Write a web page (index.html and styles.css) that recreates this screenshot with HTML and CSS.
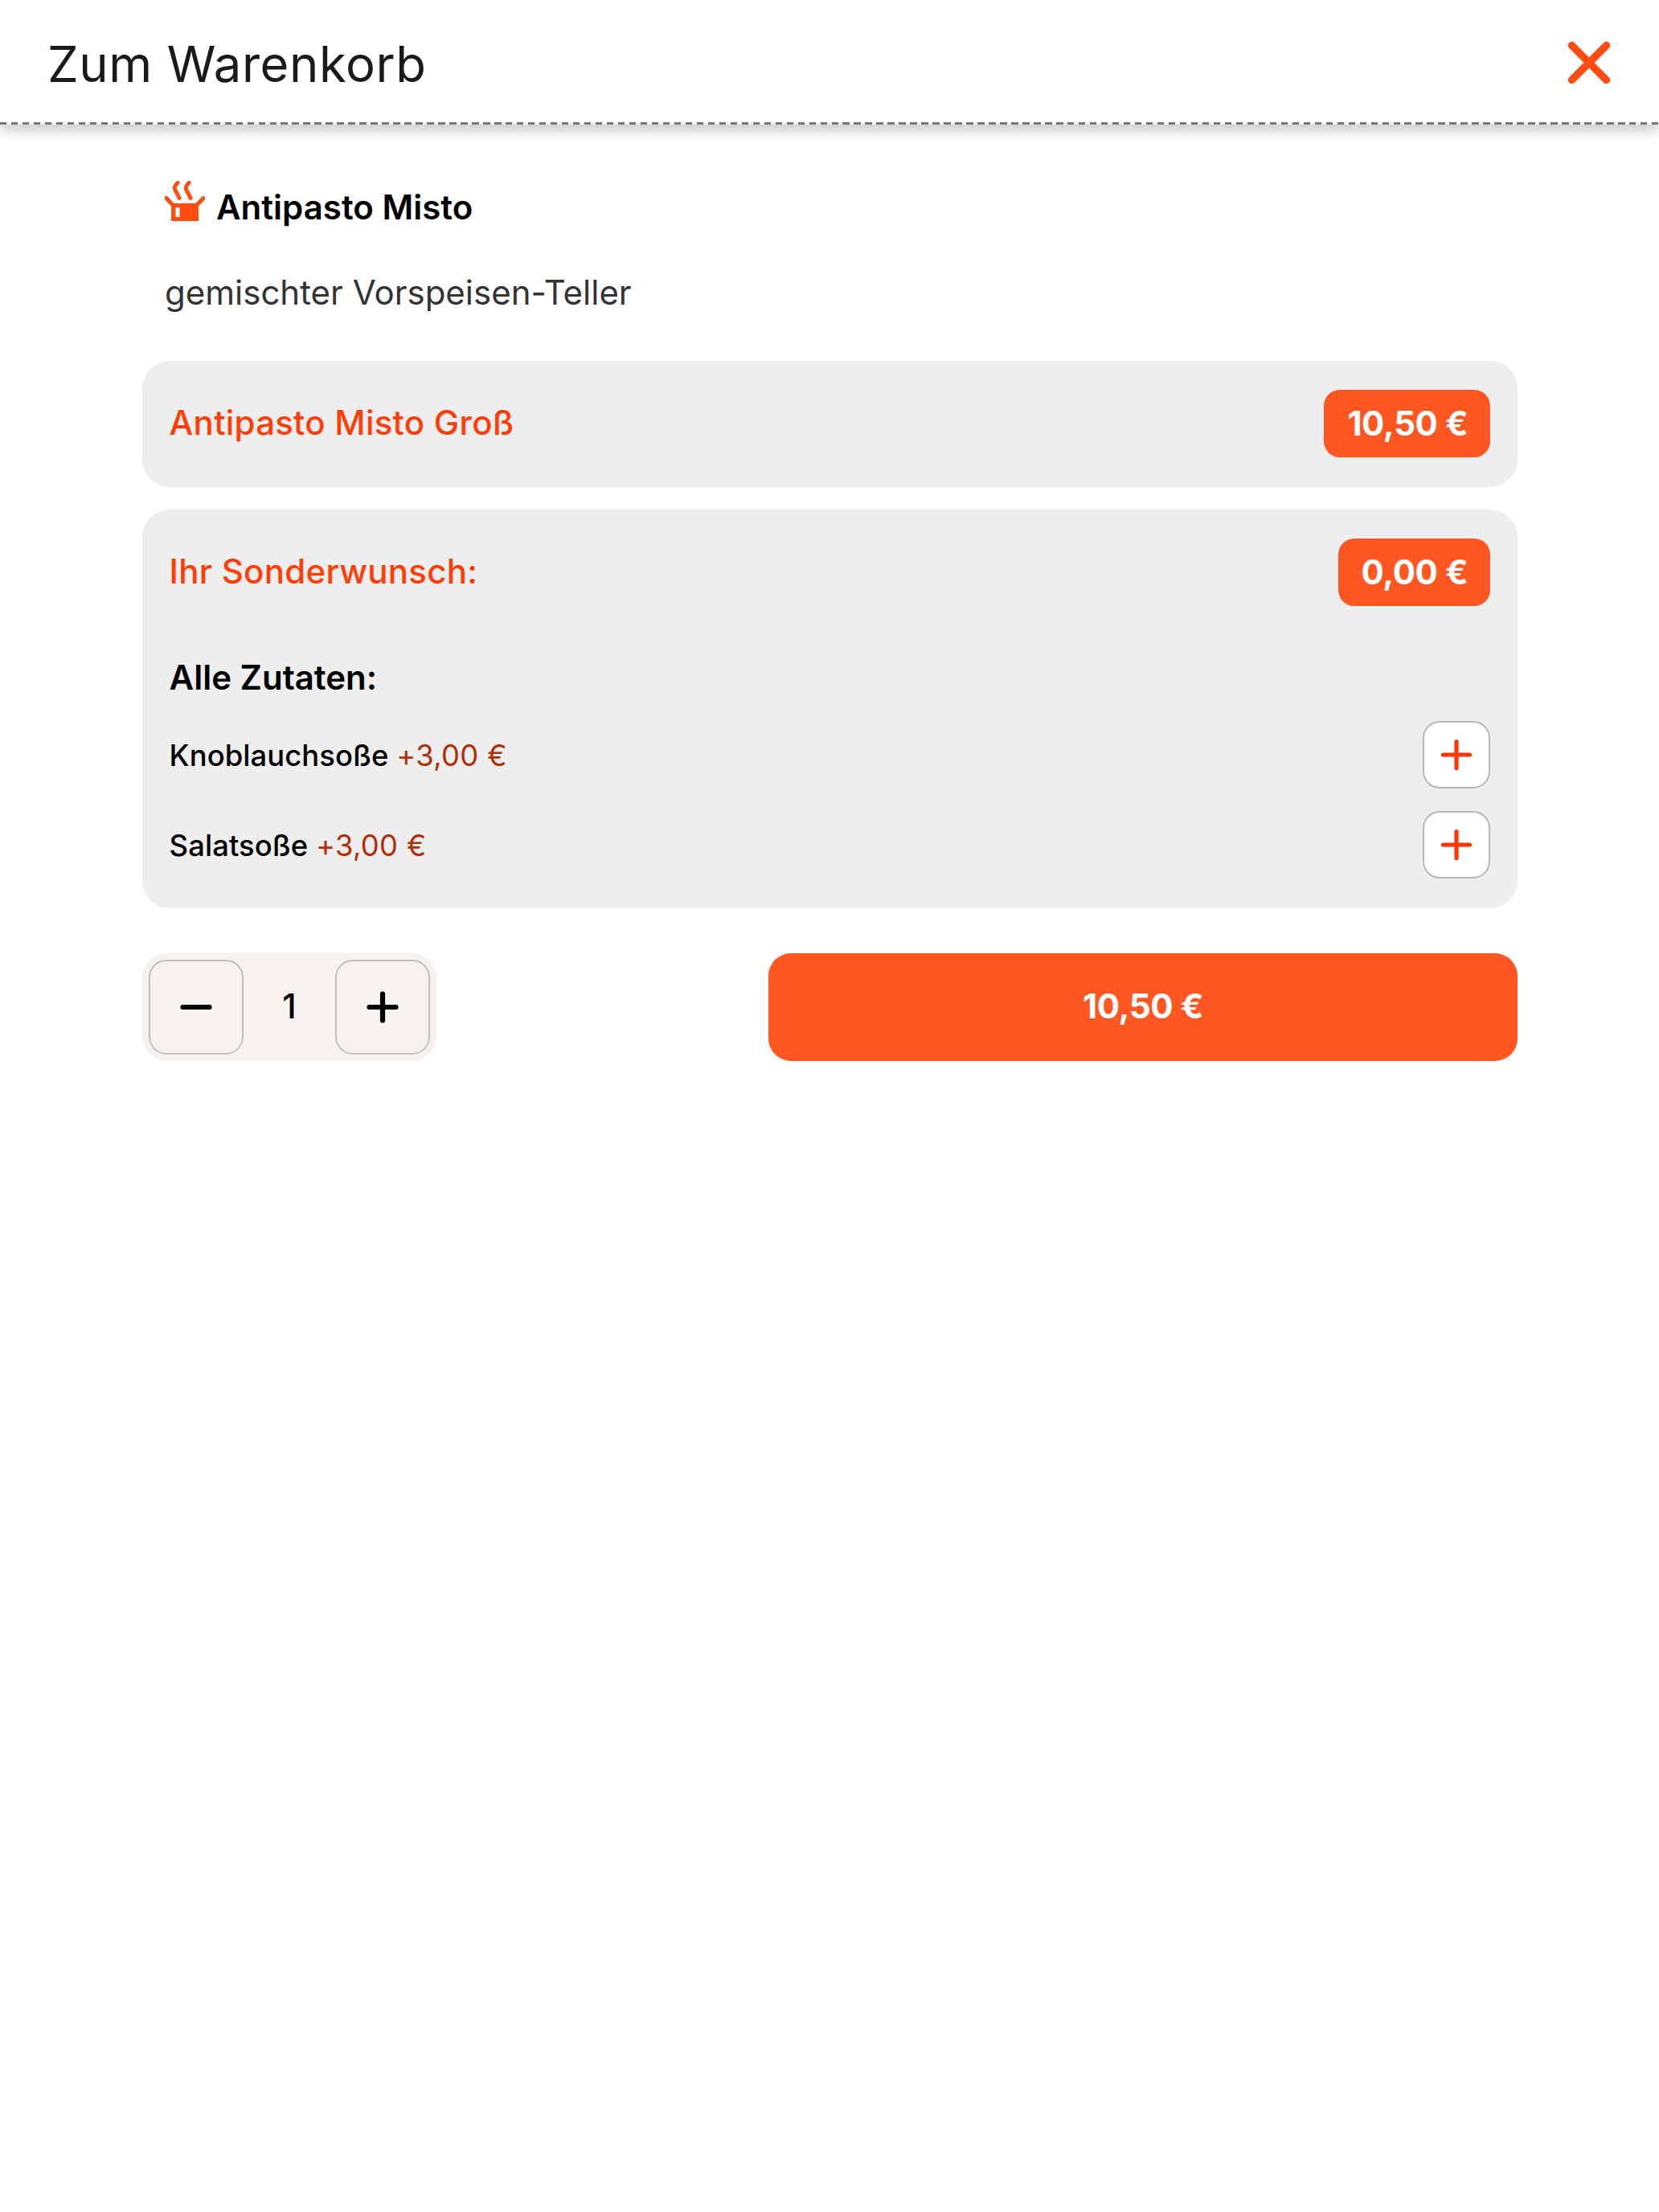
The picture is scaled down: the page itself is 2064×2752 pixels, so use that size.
FILE: index.html
```html
<!DOCTYPE html>
<html lang="de">
<head>
    <meta charset="UTF-8">
    <meta name="viewport" content="width=device-width, initial-scale=1.0">
    <title>Zum Warenkorb</title>
    <link rel="stylesheet" href="styles.css">
</head>
<body>

    <header class="header">
        <h1>Zum Warenkorb</h1>
        <button class="close" aria-label="Schließen">
            <svg viewBox="0 0 54 54"><path d="M5.5 5.5l43 43M48.5 5.5l-43 43"/></svg>
        </button>
    </header>
    <div class="divider"></div>

    <main class="container">
        <div class="product">
            <svg class="product-icon" viewBox="0 0 50 50">
                <path class="line" d="M16 2.500c-5 4.500-4.500 8-1.500 12 1.500 2.500 2.500 4 3.500 7M30 2.500c-5 4.500-4.500 8-1.500 12 1.500 2.500 2.500 4 3.500 7"/>
                <path class="line" d="M2 21.500l7.500 8M48 21.500l-7.500 8"/>
                <path class="box" d="M8 28h34v22H8zM13.500 33v12h5V33z"/>
            </svg>
            <h2>Antipasto Misto</h2>
        </div>
        <p class="description">gemischter Vorspeisen-Teller</p>

        <section class="card">
            <div class="card-head">
                <span class="card-title">Antipasto Misto Groß</span>
                <span class="price">10,50 €</span>
            </div>
        </section>

        <section class="card">
            <div class="card-head">
                <span class="card-title">Ihr Sonderwunsch:</span>
                <span class="price">0,00 €</span>
            </div>
            <h3>Alle Zutaten:</h3>
            <div class="extra">
                <span class="extra-name">Knoblauchsoße <span class="extra-price">+3,00 €</span></span>
                <button class="add" aria-label="Hinzufügen">
                    <svg viewBox="0 0 40 40"><path d="M20 3.500v33M3.500 20h33"/></svg>
                </button>
            </div>
            <div class="extra">
                <span class="extra-name">Salatsoße <span class="extra-price">+3,00 €</span></span>
                <button class="add" aria-label="Hinzufügen">
                    <svg viewBox="0 0 40 40"><path d="M20 3.500v33M3.500 20h33"/></svg>
                </button>
            </div>
        </section>

        <div class="actions">
            <div class="stepper">
                <button class="step" aria-label="Weniger">
                    <svg viewBox="0 0 40 40"><path d="M3.500 20h33"/></svg>
                </button>
                <span class="amount">1</span>
                <button class="step" aria-label="Mehr">
                    <svg viewBox="0 0 40 40"><path d="M20 3.500v33M3.500 20h33"/></svg>
                </button>
            </div>
            <button class="order">10,50 €</button>
        </div>
    </main>

</body>
</html>
```
FILE: styles.css
```css
* {
    box-sizing: border-box;
}

body {
    margin: 0;
    font-family: Inter, sans-serif;
    font-size: 42px;
    background-color: #fff;
    color: #000;
}

h1, h2, h3, p {
    margin: 0;
    white-space: nowrap;
}

button {
    margin: 0;
    padding: 0;
    border: none;
    background: none;
    font: inherit;
    cursor: pointer;
}

svg {
    display: block;
    fill: none;
    stroke: currentColor;
    stroke-linecap: round;
}

.header {
    display: flex;
    justify-content: space-between;
    align-items: center;
    height: 152px;
    padding: 3px 60px 0 59px;
    box-shadow: 0 11px 14px rgba(0, 0, 0, 0.2);
}

h1 {
    padding-top: 4px;
    font-size: 61.6px;
    font-weight: 400;
    line-height: 72px;
    letter-spacing: 0.55px;
    color: #1a1a1a;
}

.close {
    color: #ff4d12;
}

.close svg {
    width: 54px;
    height: 54px;
    stroke-width: 9.5;
}

.divider {
    height: 3px;
    background: repeating-linear-gradient(to right, #777 0, #777 8.4px, #f2f2f2 8.4px, #f2f2f2 13.98px);
}

.container {
    padding: 70px 176px 0 177px;
}

.product {
    display: flex;
    align-items: flex-start;
    gap: 14px;
    height: 74px;
    padding-left: 28px;
}

.product-icon {
    width: 50px;
    height: 50px;
    color: #ff4d12;
}

.product-icon .line {
    stroke-width: 5;
}

.product-icon .box {
    fill: currentColor;
    fill-rule: evenodd;
    stroke: none;
}

h2, h3 {
    font-size: 42px;
    font-weight: 600;
    line-height: 50px;
}

h2 {
    margin-top: 8px;
}

.description {
    height: 110px;
    margin-top: 40px;
    padding-left: 28px;
    line-height: 50px;
    color: #333;
}

.card {
    margin-bottom: 28px;
    padding: 36.400px 33.600px;
    border-radius: 34px;
    background-color: #eee;
}

.card-head {
    display: flex;
    justify-content: space-between;
    align-items: center;
    height: 84px;
}

.card-title {
    padding-bottom: 3px;
    font-weight: 500;
    letter-spacing: 0.25px;
    color: #ff3d08;
}

.price {
    padding: 0 28px 0 29px;
    border-radius: 20px;
    background-color: #ff5722;
    color: #fff;
    font-weight: 700;
    line-height: 84px;
    letter-spacing: -0.4px;
}

h3 {
    margin: 64px 0 29px;
}

.extra {
    display: flex;
    justify-content: space-between;
    align-items: center;
    height: 84px;
}

.extra + .extra {
    margin-top: 28px;
}

.extra-name {
    padding-top: 2px;
    font-size: 36.400px;
    font-weight: 500;
    letter-spacing: 0.08px;
}

.extra-price {
    font-weight: 400;
    letter-spacing: 0.3px;
    color: #b02f0c;
}

.add {
    display: grid;
    place-items: center;
    width: 84px;
    height: 84px;
    border: 2px solid #b8b8b8;
    border-radius: 21px;
    background-color: #fff;
    color: #ff3505;
}

.add svg, .step svg {
    width: 40px;
    height: 40px;
    stroke-width: 5.200;
}

.actions {
    display: flex;
    justify-content: space-between;
    margin-top: 56px;
}

.stepper {
    display: flex;
    justify-content: space-between;
    align-items: center;
    width: 366px;
    height: 134px;
    padding: 0 8px;
    border-radius: 30px;
    background-color: #f6f2ef;
}

.step {
    display: grid;
    place-items: center;
    width: 118px;
    height: 118px;
    border: 2px solid #c2bfbc;
    border-radius: 22px;
    color: #000;
}

.step svg {
    stroke-width: 6.200;
}

.amount {
    padding-bottom: 2px;
    font-weight: 500;
}

.order {
    width: 932px;
    height: 134px;
    padding-bottom: 2px;
    border-radius: 28px;
    background-color: #ff5722;
    color: #fff;
    font-weight: 700;
    letter-spacing: -0.4px;
}
```
